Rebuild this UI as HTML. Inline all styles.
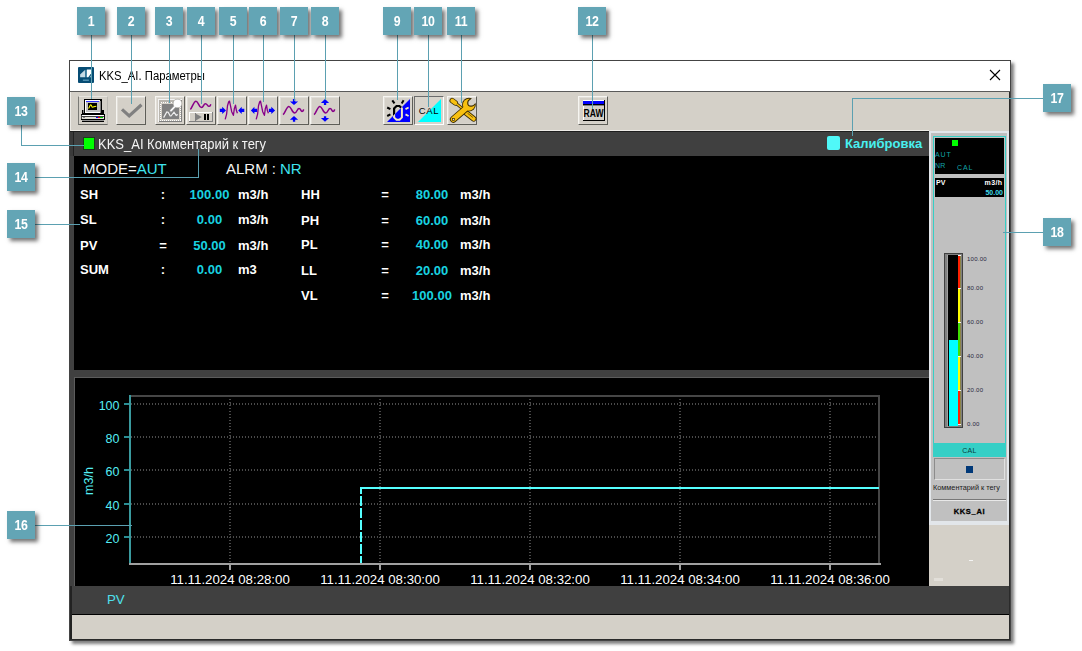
<!DOCTYPE html>
<html>
<head>
<meta charset="utf-8">
<title>KKS_AI</title>
<style>
*{box-sizing:border-box;margin:0;padding:0}
html,body{width:1082px;height:651px;overflow:hidden;background:#fff;font-family:"Liberation Sans",sans-serif;}
body{position:relative}
.abs{position:absolute}
svg text{font-family:"Liberation Sans",sans-serif}
.co{position:absolute;width:28px;height:28px;background:#63a5b5;box-shadow:2.500px 2.500px 4px rgba(0,0,0,.55);z-index:30}
.co span{display:block;width:28px;color:#fff;font-weight:bold;font-size:14px;line-height:28px;text-align:center;transform:scaleX(.88);letter-spacing:-.3px}
.ln{position:absolute;background:#5ba0b1;z-index:25}
#win{position:absolute;left:69px;top:60px;width:942px;height:581px;background:#d4d0c8;border:1px solid #444;box-shadow:3px 3px 3px rgba(0,0,0,.5);z-index:1}
#win>*{position:absolute}
#title{left:0;top:0;width:940px;height:31px;background:#fff;border-bottom:1px solid #5a5a5a}
#title .t{position:absolute;left:29px;top:8px;font-size:12px;color:#000;white-space:nowrap;transform:scaleX(.94);transform-origin:0 0}
.btn{position:absolute;top:35px;width:30px;height:29px;background:#d4d0c8;border:1px solid;border-color:#f6f5f1 #5e5e58 #5e5e58 #f6f5f1;box-shadow:inset 1px 1px 0 rgba(255,255,255,.3), inset -1px -1px 0 rgba(255,255,255,.12)}
.btn.b1{border-color:#e6e4de #bcbab4 #666662 #7a7a76;box-shadow:none}
.btn.down{border-color:#6c6c6c #fff #fff #6c6c6c;box-shadow:none;background:#d8d4cc}
.btn svg{position:absolute;left:-1px;top:-1px}
#tbline{left:0;top:70px;width:859px;height:1px;background:#1e1e1e;z-index:3}
#tbhl{left:0;top:69px;width:859px;height:1px;background:#eeece7}
#tbhl2{left:0;top:31px;width:1px;height:39px;background:#eeece7}
#hl{left:0;top:71px;width:4px;height:24px;background:#3a3a3a;border-right:1px solid #222;z-index:3}
#lb{left:0;top:70px;width:4px;height:456px;background:#404040}
#p1{left:4px;top:70px;width:855px;height:239px;background:#000}
#hdr{position:absolute;left:0;top:0;width:100%;height:25px;background:#404040}
#dv{left:0;top:309px;width:859px;height:7px;background:#404040}
#p2{left:4px;top:316px;width:855px;height:210px;background:#000;border-top:1px solid #5c5c5c;border-left:1px solid #5c5c5c}
.row{position:absolute;font-weight:bold;font-size:13px;white-space:nowrap;color:#fff;line-height:15px}
.row.c{color:#19d3e0}
.ctr{text-align:center}
.h14{position:absolute;font-size:14px;line-height:16px;white-space:nowrap;color:#f4f4f4;transform:scaleX(.928);transform-origin:0 0}
.h15{position:absolute;font-size:15px;line-height:17px;white-space:nowrap;color:#f4f4f4}
.cy{color:#3fe4ee}
#side{left:859px;top:70px;width:80px;height:394px;background:#c0c0c0;box-shadow:inset 2px 2px 0 #e2e6ea, inset -2px -4px 0 #e2e6ea}
#side>*{position:absolute}
.st{font-size:7px;line-height:8px;white-space:nowrap}
.st.b{font-weight:bold}
.gl{font-size:6px;line-height:8px;color:#26263e;white-space:nowrap;letter-spacing:.25px}
#bar{left:0;top:525px;width:940px;height:29px;background:#404040;border-bottom:1px solid #000}
#bar span{position:absolute;left:37px;top:6px;font-size:13.3px;line-height:16px;color:#4fe0ee}
#stat{left:0;top:554px;width:940px;height:25px;background:#d4d0c8}
#rb{left:939px;top:31px;width:1px;height:548px;background:#2a2a2a}
#lb2{left:0;top:525px;width:2px;height:54px;background:#222}
#bb{left:0;top:578px;width:940px;height:1px;background:#2a2a2a}
</style>
</head>
<body>
<div class="co" style="left:77px;top:7px"><span>1</span></div><div class="co" style="left:117px;top:7px"><span>2</span></div><div class="co" style="left:155px;top:7px"><span>3</span></div><div class="co" style="left:187px;top:7px"><span>4</span></div><div class="co" style="left:219px;top:7px"><span>5</span></div><div class="co" style="left:249px;top:7px"><span>6</span></div><div class="co" style="left:280px;top:7px"><span>7</span></div><div class="co" style="left:311px;top:7px"><span>8</span></div><div class="co" style="left:383px;top:7px"><span>9</span></div><div class="co" style="left:414px;top:7px"><span>10</span></div><div class="co" style="left:447px;top:7px"><span>11</span></div><div class="co" style="left:578px;top:7px"><span>12</span></div><div class="co" style="left:7px;top:97px"><span>13</span></div><div class="co" style="left:7px;top:163px"><span>14</span></div><div class="co" style="left:7px;top:210px"><span>15</span></div><div class="co" style="left:7px;top:511px"><span>16</span></div><div class="co" style="left:1043px;top:84px"><span>17</span></div><div class="co" style="left:1043px;top:218px"><span>18</span></div>
<div class="ln" style="left:91px;top:35px;width:1px;height:64px"></div><div class="ln" style="left:131px;top:35px;width:1px;height:69px"></div><div class="ln" style="left:169px;top:35px;width:1px;height:68px"></div><div class="ln" style="left:201px;top:35px;width:1px;height:69px"></div><div class="ln" style="left:233px;top:35px;width:1px;height:69px"></div><div class="ln" style="left:263px;top:35px;width:1px;height:67px"></div><div class="ln" style="left:294px;top:35px;width:1px;height:66px"></div><div class="ln" style="left:325px;top:35px;width:1px;height:65px"></div><div class="ln" style="left:397px;top:35px;width:1px;height:65px"></div><div class="ln" style="left:428px;top:35px;width:1px;height:72px"></div><div class="ln" style="left:461px;top:35px;width:1px;height:68px"></div><div class="ln" style="left:592px;top:35px;width:1px;height:74px"></div><div class="ln" style="left:21px;top:125px;width:1px;height:21px"></div><div class="ln" style="left:21px;top:145px;width:63px;height:1px"></div><div class="ln" style="left:35px;top:177px;width:164px;height:1px"></div><div class="ln" style="left:198px;top:149px;width:1px;height:29px"></div><div class="ln" style="left:35px;top:224px;width:45px;height:1px"></div><div class="ln" style="left:35px;top:525px;width:97px;height:1px"></div><div class="ln" style="left:852px;top:98px;width:191px;height:1px"></div><div class="ln" style="left:852px;top:98px;width:1px;height:38px"></div><div class="ln" style="left:1003px;top:232px;width:40px;height:1px"></div>
<div id="win">
  <div id="title">
    <svg class="abs" style="left:8px;top:6px" width="16" height="16" viewBox="0 0 16 16"><rect width="16" height="16" rx="1" fill="#064c74"/><path d="M2.1 7.6 L6.9 2.9 L7.1 10.3 L2.1 10.300z" fill="#c6dae4"/><rect x="7.1" y="2.9" width="1.8" height="7.4" fill="#3f7fa0"/><path d="M8.9 2.6 L13.2 2.6 L13.2 6.3 L10.3 10.3 L8.9 10.300z" fill="#fdfefe"/><path d="M13.2 8 L13.2 10.3 L11.5 10.300z" fill="#9dbfd0"/><rect x="4.9" y="12.5" width="6" height="1.5" fill="#4f8fb0"/></svg>
    <span class="t">KKS_AI. Параметры</span>
    <svg class="abs" style="left:919px;top:8px" width="12" height="12" viewBox="0 0 12 12"><path d="M1 1L11 11M11 1L1 11" stroke="#000" stroke-width="1.1"/></svg>
  </div>
  <div id="toolbar"><div class="btn b1" style="left:8px"><svg width="30" height="29" viewBox="0 0 30 29" shape-rendering="crispEdges">
<rect x="4" y="14" width="22" height="4" fill="#000"/>
<rect x="5" y="14" width="1" height="3" fill="#808080"/>
<rect x="6" y="3" width="18" height="15" fill="#000"/>
<rect x="7" y="4" width="15" height="13" fill="#fff"/>
<rect x="8" y="5" width="14" height="11" fill="#c0c0c0"/>
<rect x="8" y="5" width="13" height="1" fill="#3030ff"/>
<rect x="10" y="7" width="9" height="7" fill="#000"/>
<path d="M10.3 12.3 C11.8 12.3 11.5 8.9 12.7 8.9 S13.5 11.3 14.7 11.2 S16.2 10.3 18.3 10.3" stroke="#ffff00" stroke-width="1.1" fill="none" shape-rendering="auto"/>
<rect x="22" y="5" width="1" height="12" fill="#808080"/>
<rect x="3" y="18" width="24" height="1" fill="#000"/>
<rect x="3" y="19" width="24" height="1" fill="#fff"/>
<rect x="3" y="20" width="24" height="1" fill="#404040"/>
<rect x="3" y="21" width="24" height="2" fill="#e0ded6"/>
<rect x="3" y="19" width="1" height="4" fill="#404040"/><rect x="26" y="19" width="1" height="4" fill="#000"/>
<rect x="5" y="21" width="2" height="1" fill="#808080"/>
<rect x="18" y="21" width="2" height="1" fill="#0000ff"/><rect x="20" y="21" width="2" height="1" fill="#ff0000"/><rect x="22" y="21" width="3" height="1" fill="#00d000"/>
<rect x="3" y="23" width="24" height="1" fill="#000"/>
<rect x="4" y="24" width="22" height="1" fill="#909090"/>
<rect x="4" y="25" width="22" height="1" fill="#000"/>
</svg></div><div class="btn" style="left:46px"><svg width="30" height="29" viewBox="0 0 30 29"><path d="M6 13.4 L13.2 19.9 L25.5 8.7" stroke="#808080" stroke-width="3.2" fill="none" stroke-linejoin="miter"/></svg></div><div class="btn" style="left:85px"><svg width="30" height="29" viewBox="0 0 30 29">
<g shape-rendering="crispEdges">
<rect x="3" y="3" width="24" height="23" fill="#808080"/>
<rect x="3" y="3" width="24" height="1" fill="#f4f4f4"/><rect x="3" y="3" width="1" height="23" fill="#f4f4f4"/>
<rect x="4" y="4" width="22" height="21" fill="#b8b5ae"/>
<rect x="5.5" y="6.5" width="20" height="18" fill="none" stroke="#fff" stroke-width="1" stroke-dasharray="1 1"/>
<rect x="6" y="7" width="19" height="17" fill="#d4d0c8"/>
<rect x="7" y="8" width="17" height="14.5" fill="#808080"/>
</g>
<path d="M8.6 21.6 L11.8 16 L13.2 16.2 L15.2 20 L16 20 L19 16.2 L21.2 19.4 L22.8 18.4" stroke="#f0f0f0" stroke-width="1.2" fill="none"/>
<path d="M19.6 10.8 L15.8 14.8" stroke="#8c8c8c" stroke-width="3.4" stroke-linecap="round"/>
<circle cx="22.5" cy="7.4" r="4.7" fill="#b0aea8"/>
<path d="M19.4 11 L16 14.6" stroke="#fafafa" stroke-width="1.8" stroke-linecap="round"/>
<circle cx="22.5" cy="7.4" r="3.9" fill="#fdfdfd"/>
</svg></div><div class="btn" style="left:116px"><svg width="30" height="29" viewBox="0 0 30 29">
<path d="M4.3 13.4 C6 12.5 7.5 5.2 10 5.2 S12.8 11.5 15.3 11.5 S17.5 7.7 19.4 7.7 S21.4 10.3 22.9 10.3 S24.3 9.3 24.8 8.2" stroke="#880088" stroke-width="1.5" fill="none"/>
<g shape-rendering="crispEdges">
<rect x="3" y="16" width="24" height="10" fill="#808080"/>
<rect x="3" y="16" width="23" height="9" fill="#fff"/>
<rect x="4" y="17" width="22" height="8" fill="#d4d0c8"/>
<rect x="9" y="17" width="1" height="8" fill="#808080"/>
<rect x="18" y="18" width="2" height="6" fill="#000"/><rect x="21" y="18" width="2" height="6" fill="#000"/>
</g>
<path d="M9.5 17.5 L15.8 21 L9.5 24.7z" fill="#808080"/>
</svg></div><div class="btn" style="left:147px"><svg width="30" height="29" viewBox="0 0 30 29">
<path d="M8.2 23.4 L9.6 18.1 L10.5 9.8 L11.7 5.7 L12.5 5.1 L13.5 9.8 L14.7 15.7 L16.4 19.3 L17.3 12.8 L18.5 9.2 L19.4 14.6 L20.4 17.2" stroke="#880088" stroke-width="1.3" fill="none" stroke-linejoin="round"/>
<path d="M2.8 12.8h2.4v-2.1l3.8 3.700l-3.8 3.700v-2.100h-2.400z" fill="#0000ff"/>
<path d="M27.3 12.800h-2.600v-2.100l-3.5 3.700l3.5 3.700v-2.100h2.600z" fill="#0000ff"/>
</svg></div><div class="btn" style="left:178px"><svg width="30" height="29" viewBox="0 0 30 29">
<path d="M8.2 23.4 L9.6 18.1 L10.5 9.8 L11.7 5.7 L12.5 5.1 L13.5 9.8 L14.7 15.7 L16.4 19.3 L17.3 12.8 L18.5 9.2 L19.4 14.6 L20.4 17.2" stroke="#880088" stroke-width="1.3" fill="none" stroke-linejoin="round"/>
<path d="M9.1 12.8h-2.700v-2.100l-3.5 3.700l3.5 3.700v-2.100h2.700z" fill="#0000ff"/>
<path d="M20.9 12.800h2.400v-2.100l3.8 3.700l-3.8 3.700v-2.100h-2.400z" fill="#0000ff"/>
</svg></div><div class="btn" style="left:209px"><svg width="30" height="29" viewBox="0 0 30 29">
<path d="M4 18.7 C6 17.5 7.5 10.4 9.9 10.4 S13 16.9 15.6 16.9 S18 12.5 20 12.5 S21.6 15.4 23 15.4 S24.3 14.4 24.7 13.4" stroke="#880088" stroke-width="1.5" fill="none"/>
<path d="M13.9 3h2.300v2.400h2.900l-4.1 3.600l-4.1 -3.600h3z" fill="#0000ff"/>
<path d="M13.9 25.800h2.300v-2.100h2.900l-4.1 -3.800l-4.1 3.800h3z" fill="#0000ff"/>
</svg></div><div class="btn" style="left:240px"><svg width="30" height="29" viewBox="0 0 30 29">
<path d="M4 18.7 C6 17.5 7.5 10.4 9.9 10.4 S13 16.9 15.6 16.9 S18 12.5 20 12.5 S21.6 15.4 23 15.4 S24.3 14.4 24.7 13.4" stroke="#880088" stroke-width="1.5" fill="none"/>
<path d="M13.9 8.900h2.300v-2h2.900l-4.1 -3.900l-4.1 3.900h3z" fill="#0000ff"/>
<path d="M13.9 20.200h2.300v1.800h2.900l-4.1 3.800l-4.1 -3.800h3z" fill="#0000ff"/>
</svg></div><div class="btn" style="left:313px"><svg width="30" height="29" viewBox="0 0 30 29">
<clipPath id="c9"><path d="M27 3 L27 26 L4 26z"/></clipPath>
<clipPath id="c9b"><path d="M27 3 L4 26 L0 26 L0 0 L27 0z"/></clipPath>
<path d="M27 3 L27 26 L4 26z" fill="#0000ff"/>
<g clip-path="url(#c9b)" stroke="#000" fill="none">
<path d="M13.5 10 h3 l2.4 2.4 v9 l-2.4 2.4 h-3 l-2.4 -2.4 v-9z" stroke-width="2.2"/>
<path d="M9.3 4.3 L11.5 7.4 M20.6 4.3 L18.7 7.4 M4.2 11.5 L7.4 13.1 M4.2 20 L7.4 18.4" stroke-width="2"/>
</g>
<g clip-path="url(#c9)" stroke="#f0e8c4" fill="none">
<path d="M13.5 10 h3 l2.4 2.4 v9 l-2.4 2.4 h-3 l-2.4 -2.4 v-9z" stroke-width="2"/>
<path d="M22.5 13.1 L25.6 11.5 M22.5 18.4 L25.6 20" stroke-width="1.8"/>
</g>
</svg></div><div class="btn down" style="left:344px"><svg width="30" height="29" viewBox="0 0 30 29">
<path d="M27 3 L27 26 L4 26z" fill="#00ffff"/>
<text x="15" y="18" font-family="Liberation Sans" font-size="9.5" text-anchor="middle" fill="#000" letter-spacing=".6">CAL</text>
</svg></div><div class="btn" style="left:377px"><svg width="30" height="29" viewBox="0 0 30 29">
<defs>
<mask id="m1" maskUnits="userSpaceOnUse" x="0" y="0" width="30" height="29"><rect width="30" height="29" fill="#fff"/><circle cx="24" cy="6.9" r="2.7"/><path d="M22.350 4.850 L28.350 -1.150 L32.450 2.950 L26.450 8.950z"/></mask>
<mask id="m2" maskUnits="userSpaceOnUse" x="0" y="0" width="30" height="29"><rect width="30" height="29" fill="#fff"/><circle cx="24" cy="6.9" r="3.8"/><path d="M21.7 4.2 L27.7 -1.8 L33.1 3.6 L27.1 9.600z"/></mask>
</defs>
<g stroke="#3c2c00" stroke-linecap="round" fill="none">
<path d="M5.2 4.6 L8.3 6.9" stroke-width="5.4"/>
<path d="M8.5 7 L15.5 12.6" stroke-width="3"/>
<path d="M18.3 16.2 L26.6 22.8" stroke-width="5.6"/>
</g>
<g stroke="#f8c010" stroke-linecap="round" fill="none">
<path d="M5.2 4.6 L8.3 6.9" stroke-width="3.8"/>
<path d="M8.5 7 L15.5 12.6" stroke-width="1.4"/>
<path d="M18.3 16.2 L26.6 22.8" stroke-width="4"/>
</g>
<path d="M20.5 17.2 L25.8 21.4" stroke="#6a5000" stroke-width=".9"/>
<g mask="url(#m1)"><circle cx="21.9" cy="8.7" r="6.9" fill="#3c2c00"/><path d="M6.3 23.3 L18.5 12.8" stroke="#3c2c00" stroke-width="6.8" stroke-linecap="round"/></g>
<g mask="url(#m2)"><circle cx="21.9" cy="8.7" r="6" fill="#f8c010"/><path d="M6.3 23.3 L18.5 12.8" stroke="#f8c010" stroke-width="5.1" stroke-linecap="round"/></g>
<rect x="5.4" y="22.6" width="2" height="2" fill="#ece4c0" stroke="#3c2c00" stroke-width=".7"/>
</svg></div><div class="btn" style="left:508px"><svg width="30" height="29" viewBox="0 0 30 29" shape-rendering="crispEdges">
<rect x="5" y="4" width="22" height="21" fill="#000"/>
<rect x="5" y="4" width="21" height="20" fill="#d4d0c8"/>
<rect x="5" y="4" width="21" height="1" fill="#fff"/><rect x="5" y="4" width="1" height="20" fill="#fff"/>
<rect x="5" y="5" width="21" height="3" fill="#0000ff"/>
<rect x="5" y="8" width="21" height="1" fill="#000"/>
<rect x="5" y="9" width="21" height="1" fill="#808080"/>
<text x="15.5" y="21" font-family="Liberation Sans" font-size="10" font-weight="bold" text-anchor="middle" fill="#000" textLength="20" lengthAdjust="spacingAndGlyphs" shape-rendering="auto">RAW</text>
</svg></div></div>
  <div id="tbline"></div><div id="tbhl"></div><div id="tbhl2"></div><div id="hl"></div>
  <div id="lb"></div>
  <div id="p1"><div id="hdr"></div></div>
  <div id="dv"></div>
  <div id="p2"></div>
  <div id="txt" style="left:0;top:0">
    <div class="abs" style="left:13px;top:76px;width:12px;height:13px;background:#00ff00;border:1px solid #1c3c1c"></div>
    <div class="h14" style="left:28px;top:75px">KKS_AI Комментарий к тегу</div>
    <div class="abs" style="left:757px;top:75px;width:13px;height:14px;background:#50f8f8;border-radius:2px"></div>
    <div class="row" style="left:775px;top:75px;color:#48f0f0;font-size:13px">Калибровка</div>
    <div class="h15" style="left:13px;top:99px">MODE=<span class="cy">AUT</span></div>
    <div class="h15" style="left:156px;top:99px">ALRM :</div>
    <div class="h15 cy" style="left:210px;top:99px">NR</div>
    <div class="row" style="top:126px;left:10px">SH</div><div class="row ctr" style="top:126px;left:83px;width:20px">:</div><div class="row ctr c" style="top:126px;left:109.5px;width:60px">100.00</div><div class="row" style="top:126px;left:168px">m3/h</div><div class="row" style="top:151px;left:10px">SL</div><div class="row ctr" style="top:151px;left:83px;width:20px">:</div><div class="row ctr c" style="top:151px;left:109.5px;width:60px">0.00</div><div class="row" style="top:151px;left:168px">m3/h</div><div class="row" style="top:176.5px;left:10px">PV</div><div class="row ctr" style="top:176.5px;left:83px;width:20px">=</div><div class="row ctr c" style="top:176.5px;left:109.5px;width:60px">50.00</div><div class="row" style="top:176.5px;left:168px">m3/h</div><div class="row" style="top:201px;left:10px">SUM</div><div class="row ctr" style="top:201px;left:83px;width:20px">:</div><div class="row ctr c" style="top:201px;left:109.5px;width:60px">0.00</div><div class="row" style="top:201px;left:168px">m3</div><div class="row" style="top:126px;left:231px">HH</div><div class="row ctr" style="top:126px;left:305px;width:20px">=</div><div class="row ctr c" style="top:126px;left:332px;width:60px">80.00</div><div class="row" style="top:126px;left:390px">m3/h</div><div class="row" style="top:152px;left:231px">PH</div><div class="row ctr" style="top:152px;left:305px;width:20px">=</div><div class="row ctr c" style="top:152px;left:332px;width:60px">60.00</div><div class="row" style="top:152px;left:390px">m3/h</div><div class="row" style="top:176px;left:231px">PL</div><div class="row ctr" style="top:176px;left:305px;width:20px">=</div><div class="row ctr c" style="top:176px;left:332px;width:60px">40.00</div><div class="row" style="top:176px;left:390px">m3/h</div><div class="row" style="top:202px;left:231px">LL</div><div class="row ctr" style="top:202px;left:305px;width:20px">=</div><div class="row ctr c" style="top:202px;left:332px;width:60px">20.00</div><div class="row" style="top:202px;left:390px">m3/h</div><div class="row" style="top:227px;left:231px">VL</div><div class="row ctr" style="top:227px;left:305px;width:20px">=</div><div class="row ctr c" style="top:227px;left:332px;width:60px">100.00</div><div class="row" style="top:227px;left:390px">m3/h</div>
  </div>
  <svg class="abs" style="left:0;top:0" width="860" height="526" viewBox="70 61 860 526"><line x1="131" y1="404" x2="878" y2="404" stroke="#4a4a4a" stroke-width="2" stroke-dasharray="1 2" shape-rendering="crispEdges"/><rect x="124" y="403" width="5" height="2" fill="#2a8e94" shape-rendering="crispEdges"/><text x="119.5" y="409.5" text-anchor="end" font-size="12.5" fill="#55eef4">100</text><line x1="131" y1="437" x2="878" y2="437" stroke="#4a4a4a" stroke-width="2" stroke-dasharray="1 2" shape-rendering="crispEdges"/><rect x="124" y="436" width="5" height="2" fill="#2a8e94" shape-rendering="crispEdges"/><text x="119.5" y="442.5" text-anchor="end" font-size="12.5" fill="#55eef4">80</text><line x1="131" y1="470" x2="878" y2="470" stroke="#4a4a4a" stroke-width="2" stroke-dasharray="1 2" shape-rendering="crispEdges"/><rect x="124" y="469" width="5" height="2" fill="#2a8e94" shape-rendering="crispEdges"/><text x="119.5" y="475.5" text-anchor="end" font-size="12.5" fill="#55eef4">60</text><line x1="131" y1="504" x2="878" y2="504" stroke="#4a4a4a" stroke-width="2" stroke-dasharray="1 2" shape-rendering="crispEdges"/><rect x="124" y="503" width="5" height="2" fill="#2a8e94" shape-rendering="crispEdges"/><text x="119.5" y="509.5" text-anchor="end" font-size="12.5" fill="#55eef4">40</text><line x1="131" y1="537" x2="878" y2="537" stroke="#4a4a4a" stroke-width="2" stroke-dasharray="1 2" shape-rendering="crispEdges"/><rect x="124" y="536" width="5" height="2" fill="#2a8e94" shape-rendering="crispEdges"/><text x="119.5" y="542.5" text-anchor="end" font-size="12.5" fill="#55eef4">20</text><line x1="230" y1="397" x2="230" y2="563" stroke="#4a4a4a" stroke-width="2" stroke-dasharray="1 2" stroke-dashoffset="1" shape-rendering="crispEdges"/><rect x="229" y="565" width="2" height="5" fill="#a0a0a0" shape-rendering="crispEdges"/><line x1="380" y1="397" x2="380" y2="563" stroke="#4a4a4a" stroke-width="2" stroke-dasharray="1 2" stroke-dashoffset="1" shape-rendering="crispEdges"/><rect x="379" y="565" width="2" height="5" fill="#a0a0a0" shape-rendering="crispEdges"/><line x1="530" y1="397" x2="530" y2="563" stroke="#4a4a4a" stroke-width="2" stroke-dasharray="1 2" stroke-dashoffset="1" shape-rendering="crispEdges"/><rect x="529" y="565" width="2" height="5" fill="#a0a0a0" shape-rendering="crispEdges"/><line x1="680" y1="397" x2="680" y2="563" stroke="#4a4a4a" stroke-width="2" stroke-dasharray="1 2" stroke-dashoffset="1" shape-rendering="crispEdges"/><rect x="679" y="565" width="2" height="5" fill="#a0a0a0" shape-rendering="crispEdges"/><line x1="830" y1="397" x2="830" y2="563" stroke="#4a4a4a" stroke-width="2" stroke-dasharray="1 2" stroke-dashoffset="1" shape-rendering="crispEdges"/><rect x="829" y="565" width="2" height="5" fill="#a0a0a0" shape-rendering="crispEdges"/><rect x="129" y="395" width="751" height="2" fill="#464646" shape-rendering="crispEdges"/><rect x="878" y="395" width="2" height="169" fill="#464646" shape-rendering="crispEdges"/><rect x="129" y="563" width="752" height="2" fill="#a0a0a0" shape-rendering="crispEdges"/><rect x="129" y="395" width="2" height="168" fill="#3a9a9e" shape-rendering="crispEdges"/><rect x="360" y="487" width="519" height="2" fill="#55ffff" shape-rendering="crispEdges"/><rect x="360" y="487" width="2" height="7" fill="#55ffff" shape-rendering="crispEdges"/><rect x="360" y="496" width="2" height="10" fill="#55ffff" shape-rendering="crispEdges"/><rect x="360" y="508" width="2" height="10" fill="#55ffff" shape-rendering="crispEdges"/><rect x="360" y="520" width="2" height="10" fill="#55ffff" shape-rendering="crispEdges"/><rect x="360" y="532" width="2" height="10" fill="#55ffff" shape-rendering="crispEdges"/><rect x="360" y="544" width="2" height="10" fill="#55ffff" shape-rendering="crispEdges"/><rect x="360" y="556" width="2" height="7" fill="#55ffff" shape-rendering="crispEdges"/><text x="230" y="584" text-anchor="middle" font-size="13.25" fill="#fff">11.11.2024 08:28:00</text><text x="380" y="584" text-anchor="middle" font-size="13.25" fill="#fff">11.11.2024 08:30:00</text><text x="530" y="584" text-anchor="middle" font-size="13.25" fill="#fff">11.11.2024 08:32:00</text><text x="680" y="584" text-anchor="middle" font-size="13.25" fill="#fff">11.11.2024 08:34:00</text><text x="830" y="584" text-anchor="middle" font-size="13.25" fill="#fff">11.11.2024 08:36:00</text><text transform="translate(93.2,481) rotate(-90)" text-anchor="middle" font-size="12.5" fill="#55eef4">m3/h</text></svg>
  <div id="side"><div class="abs" style="left:4px;top:5px;width:73px;height:321px;border:1px solid #35cfc6"></div><div class="abs" style="left:6px;top:7px;width:69px;height:36px;background:#000"></div><div class="abs" style="left:6px;top:47px;width:69px;height:19px;background:#000"></div><div class="abs" style="left:23px;top:9px;width:6px;height:6px;background:#00ff00"></div><div class="st" style="left:6px;top:20px;color:#12a5aa;letter-spacing:.9px">AUT</div><div class="st" style="left:6px;top:31px;color:#12a5aa;letter-spacing:.3px">NR</div><div class="st" style="left:28px;top:33px;color:#12a5aa;letter-spacing:.9px">CAL</div><div class="st b" style="left:7px;top:48px;color:#fff">PV</div><div class="st b" style="left:40px;top:48px;width:33.500px;text-align:right;color:#fff;letter-spacing:.4px">m3/h</div><div class="st b" style="left:40px;top:58px;width:34px;text-align:right;color:#3fdcec">50.00</div><div class="abs" style="left:15px;top:122px;width:19px;height:175px;background:#808080;border:1px solid #404040"></div><div class="abs" style="left:18px;top:124px;width:1px;height:172px;background:#a0a0a0"></div><div class="abs" style="left:31px;top:124px;width:1px;height:171px;background:#8c8448"></div><div class="abs" style="left:19px;top:124px;width:10px;height:171px;background:#000"></div><div class="abs" style="left:20px;top:209px;width:9px;height:86px;background:#00ffff"></div><div class="abs" style="left:29px;top:124px;width:2px;height:33px;background:#ff2000"></div><div class="abs" style="left:29px;top:157px;width:2px;height:34px;background:#ffff00"></div><div class="abs" style="left:29px;top:191px;width:2px;height:34px;background:#40e000"></div><div class="abs" style="left:29px;top:225px;width:2px;height:34px;background:#ffff00"></div><div class="abs" style="left:29px;top:259px;width:2px;height:35px;background:#ff2000"></div><div class="abs" style="left:29px;top:124px;width:3px;height:1px;background:#f4f4f4"></div><div class="gl" style="left:38px;top:124px">100.00</div><div class="abs" style="left:29px;top:157px;width:3px;height:1px;background:#f4f4f4"></div><div class="gl" style="left:38px;top:153px">80.00</div><div class="abs" style="left:29px;top:191px;width:3px;height:1px;background:#f4f4f4"></div><div class="gl" style="left:38px;top:187px">60.00</div><div class="abs" style="left:29px;top:225px;width:3px;height:1px;background:#f4f4f4"></div><div class="gl" style="left:38px;top:221px">40.00</div><div class="abs" style="left:29px;top:259px;width:3px;height:1px;background:#f4f4f4"></div><div class="gl" style="left:38px;top:255px">20.00</div><div class="abs" style="left:29px;top:293px;width:3px;height:1px;background:#f4f4f4"></div><div class="gl" style="left:38px;top:289px">0.00</div><div class="abs" style="left:4px;top:312px;width:73px;height:14px;background:#35cfc6"></div><div class="st" style="left:4px;top:316px;width:73px;text-align:center;color:#083c3c;letter-spacing:.3px">CAL</div><div class="abs" style="left:5px;top:327px;width:71px;height:22px;border:1px solid #8c8c8c;border-right-color:#e0e0e0;border-bottom-color:#e0e0e0"></div><div class="abs" style="left:37px;top:335px;width:7px;height:7px;background:#003878"></div><div class="st" style="left:4px;top:353px;color:#202020;font-size:7.3px">Комментарий к тегу</div><div class="abs" style="left:4px;top:368px;width:73px;height:1px;background:#787878"></div><div class="abs" style="left:4px;top:369px;width:73px;height:1px;background:#e8e8e8"></div><div class="st b" style="left:4px;top:377px;width:73px;text-align:center;color:#000;font-size:7.5px;letter-spacing:.7px;-webkit-text-stroke:.3px #000">KKS_AI</div></div><div class="abs" style="left:899px;top:499px;width:4px;height:1px;background:#f4f4f4"></div><div class="abs" style="left:864px;top:517px;width:9px;height:3px;background:#e2dfd9"></div>
  <div id="bar"><span>PV</span></div>
  <div id="stat"></div>
  <div id="rb"></div><div id="lb2"></div><div id="bb"></div>
</div>
</body>
</html>
